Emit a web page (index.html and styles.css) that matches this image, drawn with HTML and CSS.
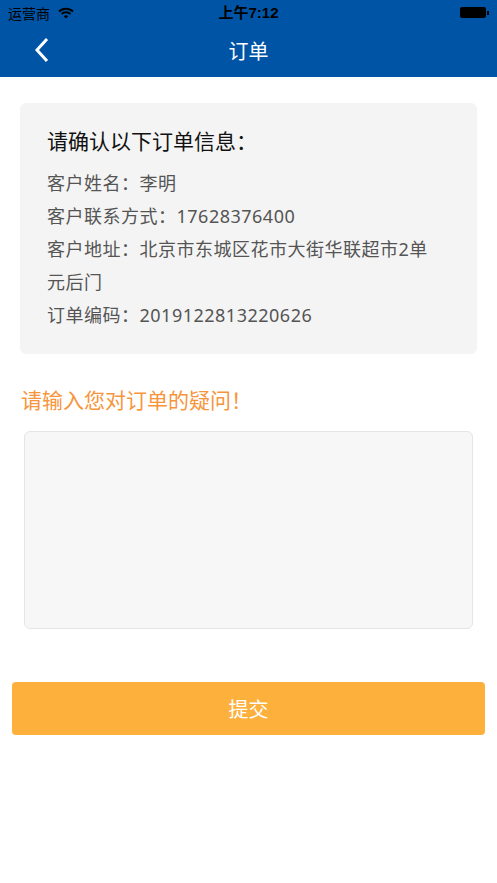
FILE: index.html
```html
<!DOCTYPE html>
<html>
    <head>
        <meta charset="UTF-8">
        <title>订单</title>

        <link rel="stylesheet" href="styles.css">
    </head>

    <body>

        <div class="topbar">
            <div class="status">
                <div class="status-left">
                    运营商
                    <svg class="wifi" width="16" height="12" viewBox="0 0 16 12">
                        <path d="M1 4.5 A10 10 0 0 1 15 4.5" fill="none" stroke="#000" stroke-width="2"/>
                        <path d="M3.6 7 A6.4 6.4 0 0 1 12.4 7" fill="none" stroke="#000" stroke-width="2"/>
                        <path d="M8 11.5 L5.8 9.3 A3.2 3.2 0 0 1 10.2 9.3 Z" fill="#000"/>
                    </svg>
                </div>
                <div class="status-time">上午7:12</div>
                <div class="status-right">
                    <span class="battery"></span><span class="battery-nub"></span>
                </div>
            </div>
            <div class="nav">
                <svg class="back" width="16" height="26" viewBox="0 0 16 26">
                    <path d="M13 2 L3 13 L13 24" fill="none" stroke="#fff" stroke-width="3"/>
                </svg>
                <div class="nav-title">订单</div>
            </div>
        </div>

        <div class="content">
            <div class="card">
                <div class="card-title">请确认以下订单信息：</div>
                <div class="card-line">客户姓名：李明</div>
                <div class="card-line">客户联系方式：17628376400</div>
                <div class="card-line">客户地址：北京市东城区花市大街华联超市2单元后门</div>
                <div class="card-line">订单编码：2019122813220626</div>
            </div>

            <div class="question">请输入您对订单的疑问！</div>

            <textarea class="ask"></textarea>

            <button class="submit">提交</button>
        </div>

    </body>
</html>
```

FILE: styles.css
```css
body {
    margin: 0;
    background-color: #fff;
    font-family: "Noto Sans CJK SC", "Noto Sans", sans-serif;
    width: 497px;
}

.topbar {
    background-color: #0054a5;
    height: 77px;
}

.status {
    height: 25px;
    display: flex;
    align-items: center;
    justify-content: space-between;
    padding: 0 8px;
    font-size: 14px;
    color: #000;
}

.status-left {
    display: flex;
    align-items: center;
    gap: 8px;
    width: 120px;
    line-height: 1;
}

.status-time {
    font-family: "Liberation Sans", "Noto Sans CJK SC", sans-serif;
    font-weight: bold;
    font-size: 15px;
    line-height: 1;
}

.status-right {
    width: 120px;
    display: flex;
    justify-content: flex-end;
    align-items: center;
}

.battery {
    width: 26px;
    height: 11px;
    background-color: #000;
    border-radius: 2px;
}

.battery-nub {
    width: 2px;
    height: 4px;
    background-color: #000;
    margin-left: 1px;
}

.nav {
    height: 52px;
    display: flex;
    align-items: center;
    justify-content: center;
    position: relative;
}

.back {
    position: absolute;
    left: 34px;
    top: 12px;
}

.nav-title {
    color: #fff;
    font-size: 20px;
    margin-top: -2px;
}

.content {
    padding: 26px 12px 0 12px;
    display: flex;
    flex-direction: column;
}

.card {
    margin: 0 8px;
    background-color: #f4f4f4;
    border-radius: 6px;
    padding: 20px 40px 22px 27px;
}

.card-title {
    font-size: 21px;
    color: #111;
    line-height: 34px;
    margin-bottom: 10px;
}

.card-line {
    font-family: "Noto Sans", "Noto Sans CJK SC", sans-serif;
    font-size: 18px;
    letter-spacing: 0.5px;
    color: #555;
    line-height: 33px;
}

.question {
    color: #f7953c;
    font-size: 21px;
    line-height: 30px;
    margin: 30px 0 0 9px;
}

.ask {
    margin: 17px 12px 0 12px;
    height: 196px;
    background-color: #f7f7f7;
    border: 1px solid #e5e5e5;
    border-radius: 6px;
    resize: none;
    padding: 0;
}

.submit {
    margin-top: 53px;
    height: 53px;
    background-color: #fdb03c;
    border: none;
    border-radius: 4px;
    color: #fff;
    font-family: "Noto Sans CJK SC", sans-serif;
    font-size: 20px;
}
```
